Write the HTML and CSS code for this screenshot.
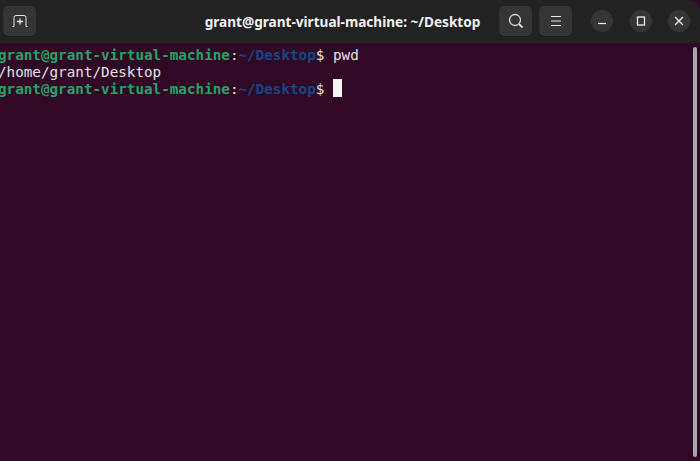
FILE: index.html
```html
<!DOCTYPE html>
<html lang="en">
<head>
<meta charset="utf-8">
<title>grant@grant-virtual-machine: ~/Desktop</title>
<link rel="stylesheet" href="styles.css">
</head>
<body>
<div class="window">
  <header class="titlebar">
    <button class="btn" aria-label="New tab">
      <svg width="16" height="12" viewBox="0 0 16 12" fill="none" stroke="#e6e6e6" stroke-width="1"><path d="M0.500 11.500H2V2.500Q2 0.500 4 0.500H12Q14 0.500 14 2.500V11.500H15.500"/><path d="M8 3.500V9.500M5 6.500H11" stroke-width="1.300"/></svg>
    </button>
    <div class="title">grant@grant-virtual-machine: ~/Desktop</div>
    <div class="actions">
      <button class="btn" aria-label="Search">
        <svg width="16" height="16" viewBox="0 0 16 16" fill="none" stroke="#dcdcdc" stroke-width="1.300"><circle cx="7" cy="7" r="5.500"/><path d="M11 11L14.500 14.500" stroke-width="1.800"/></svg>
      </button>
      <button class="btn" aria-label="Menu">
        <svg width="12" height="12" viewBox="0 0 12 12" fill="none" stroke="#e6e6e6" stroke-width="1"><path d="M1 1.500H11M1 6H11M1 10.500H11"/></svg>
      </button>
    </div>
    <div class="controls">
      <button class="ctl" aria-label="Minimize"><svg width="10" height="10" viewBox="0 0 10 10" fill="none" stroke="#eee" stroke-width="1.200"><path d="M1 7.500H9"/></svg></button>
      <button class="ctl" aria-label="Maximize"><svg width="10" height="10" viewBox="0 0 10 10" fill="none" stroke="#eee" stroke-width="1.300"><rect x="1.500" y="1" width="7" height="8"/></svg></button>
      <button class="ctl" aria-label="Close"><svg width="10" height="10" viewBox="0 0 10 10" fill="none" stroke="#eee" stroke-width="1.400"><path d="M1 1L9 9M9 1L1 9"/></svg></button>
    </div>
  </header>
  <main class="terminal">
    <div class="line"><span class="user">grant@grant-virtual-machine</span>:<span class="path">~/Desktop</span>$ pwd</div>
    <div class="line">/home/grant/Desktop</div>
    <div class="line"><span class="user">grant@grant-virtual-machine</span>:<span class="path">~/Desktop</span>$ <span class="cursor"></span></div>
    <div class="scrollbar"></div>
  </main>
</div>
</body>
</html>
```
FILE: styles.css
```css
* { box-sizing: border-box; }
html, body { margin: 0; height: 100%; overflow: hidden; background: #300a24; }
.window { width: 700px; height: 461px; display: flex; flex-direction: column; }
.titlebar {
  height: 43px;
  flex: none;
  display: flex;
  align-items: center;
  padding: 0 10px 1px 3px;
  background: #222222;
  border-radius: 0 12px 0 0;
}
.btn {
  width: 33px;
  height: 30px;
  padding: 0;
  display: flex;
  align-items: center;
  justify-content: center;
  background: #353535;
  border: 0;
  border-radius: 5px;
  box-shadow: 0 1px 0 #1a1a1a;
}
.title {
  flex: 1;
  text-align: center;
  padding-left: 150px;
  color: #f2f2f2;
  font: 700 13.600px "Noto Sans", sans-serif;
  white-space: nowrap;
}
.actions { display: flex; gap: 7px; }
.controls { display: flex; gap: 16.500px; margin-left: 19px; }
.ctl {
  width: 22px;
  height: 22px;
  padding: 0;
  display: flex;
  align-items: center;
  justify-content: center;
  background: #353535;
  border: 0;
  border-radius: 50%;
}
.terminal {
  position: relative;
  flex: 1;
  padding: 4px 0 0;
  background: #300a24;
  color: #e6e2e4;
  font: 14.280px/17px "DejaVu Sans Mono", monospace;
}
.line { height: 17px; margin-left: -2px; white-space: pre; }
.user { color: #26a269; font-weight: 700; }
.path { color: #12488b; font-weight: 700; }
.cursor { display: inline-block; width: 9px; height: 18px; margin: -3px 0; background: #f4f4f4; }
.scrollbar {
  position: absolute;
  top: 4px;
  bottom: 4px;
  right: 3px;
  width: 4px;
  border-radius: 2px;
  background: #a8a8a8;
}
```
